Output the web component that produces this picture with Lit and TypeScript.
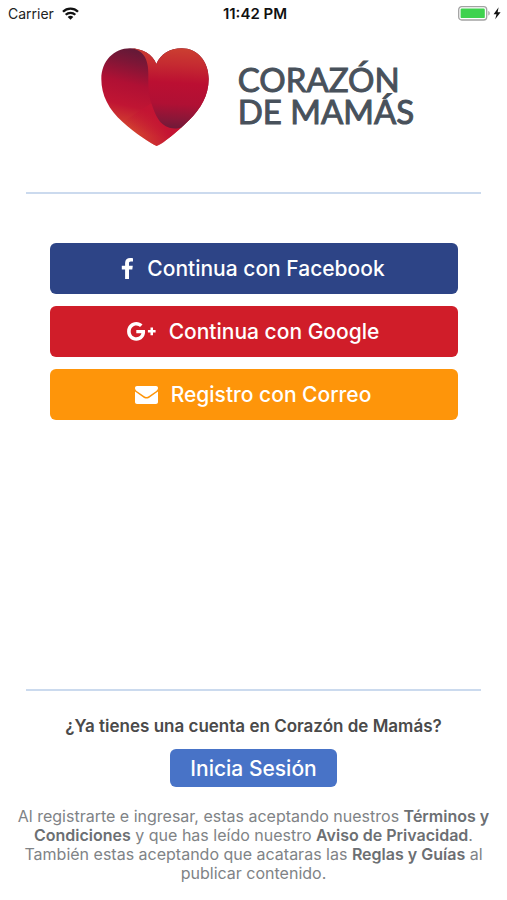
import { LitElement, html, css } from "lit";
import { customElement } from "lit/decorators.js";

@customElement("status-bar")
class StatusBar extends LitElement {
  static styles = css`
    :host {
      display: grid;
      grid-template-columns: 1fr auto 1fr;
      align-items: center;
      height: 27px;
      padding: 0 5px 0 8px;
      font-size: 14px;
      color: #222;
    }
    .carrier {
      display: flex;
      align-items: center;
      gap: 8px;
    }
    .time {
      font-size: 15px;
      font-weight: 600;
      color: #111;
    }
    .battery {
      display: flex;
      justify-content: flex-end;
    }
    svg {
      display: block;
    }
  `;

  render() {
    return html`
      <div class="carrier">
        <span>Carrier</span>
        <svg width="17" height="13" viewBox="0 0 17 13" aria-label="Wi-Fi">
          <g fill="none" stroke="#111" stroke-width="2.3">
            <path d="M1 4.8C5.2 0.6 11.8 0.6 16 4.8" />
            <path d="M3.7 7.8C6.4 5.1 10.6 5.1 13.3 7.8" />
          </g>
          <path d="M5.7 9.9C7.3 8.4 9.7 8.4 11.3 9.9L8.5 12.8Z" fill="#111" />
        </svg>
      </div>
      <div class="time">11:42 PM</div>
      <div class="battery">
        <svg width="44" height="15" viewBox="0 0 44 15" aria-label="Cargando">
          <rect x="0.7" y="0.7" width="28" height="13.3" rx="3" fill="#fff" stroke="#a3a3a3" stroke-width="1.3" />
          <rect x="2.6" y="2.6" width="24.2" height="9.5" rx="1.2" fill="#3fd24f" />
          <path d="M30.3 5C32.2 5.6 32.2 9 30.3 9.6Z" fill="#a3a3a3" />
          <path d="M40.6 1.3L35.6 8.2H38.5L37.2 13.2L42.6 6.3H39.6Z" fill="#111" />
        </svg>
      </div>
    `;
  }
}

@customElement("brand-logo")
class BrandLogo extends LitElement {
  static styles = css`
    :host {
      display: flex;
      justify-content: center;
      align-items: center;
      gap: 29px;
      padding-left: 8px;
    }
    svg {
      display: block;
      flex: none;
    }
    .name {
      margin: 0;
      padding-bottom: 4px;
      font-family: Lato, sans-serif;
      font-size: 33px;
      font-weight: 400;
      line-height: 32px;
      color: #48515b;
      -webkit-text-stroke: 1px #48515b;
    }
  `;

  render() {
    return html`
      <svg width="108" height="98" viewBox="33 38 324 294" aria-hidden="true">
        <defs>
          <linearGradient id="left" gradientUnits="userSpaceOnUse" x1="150" y1="50" x2="95" y2="280">
            <stop offset="0" stop-color="#651937" />
            <stop offset="0.15" stop-color="#7d1636" />
            <stop offset="0.42" stop-color="#b01034" />
            <stop offset="0.7" stop-color="#c01533" />
            <stop offset="1" stop-color="#d5482f" />
          </linearGradient>
          <linearGradient id="tail" gradientUnits="userSpaceOnUse" x1="120" y1="300" x2="230" y2="250">
            <stop offset="0" stop-color="#c41433" stop-opacity="0" />
            <stop offset="0.9" stop-color="#c41433" />
          </linearGradient>
          <linearGradient id="right" gradientUnits="userSpaceOnUse" x1="265" y1="40" x2="252" y2="284">
            <stop offset="0" stop-color="#cb3e31" />
            <stop offset="0.2" stop-color="#c52a31" />
            <stop offset="0.42" stop-color="#bb0f32" />
            <stop offset="0.68" stop-color="#b01034" />
            <stop offset="0.88" stop-color="#871738" />
            <stop offset="1" stop-color="#6a1b38" />
          </linearGradient>
        </defs>
        <path
          d="M200 332C182 325 136 294 98 260C56 222 34 180 34 131C34 77 72 39 120 39C158 39 188 58 199 86C212 56 240 39 275 39C322 39 356 78 356 131C356 180 332 220 300 252C268 284 220 325 200 332Z"
          fill="url(#left)"
        />
        <path
          d="M200 332C182 325 136 294 98 260L184 204L276 275C240 306 214 328 200 332Z"
          fill="url(#tail)"
        />
        <path
          d="M120 39C158 39 188 58 199 86C212 56 240 39 275 39C322 39 356 78 356 131C356 180 332 220 300 252C290 262 284 269 276 275C262 281 250 280 238 277C208 268 197 242 184 204C174 174 175 150 175 118C176 72 160 42 120 39Z"
          fill="url(#right)"
        />
      </svg>
      <h1 class="name">CORAZÓN<br />DE MAMÁS</h1>
    `;
  }
}

@customElement("app-root")
class AppRoot extends LitElement {
  static styles = css`
    :host {
      display: flex;
      flex-direction: column;
      box-sizing: border-box;
      min-height: 100vh;
      background: #fff;
      font-family: Inter, "Liberation Sans", sans-serif;
    }
    brand-logo {
      margin-top: 21px;
    }
    .rule {
      width: calc(100% - 52px);
      height: 2px;
      margin: 0 auto;
      border: 0;
      background: #cbdaee;
    }
    .rule.top {
      margin-top: 46px;
    }
    .options {
      display: flex;
      flex-direction: column;
      flex: 1;
      gap: 12px;
      padding: 49px 49px 24px 50px;
    }
    button {
      border: 0;
      border-radius: 6px;
      font-family: inherit;
      font-size: 21px;
      font-weight: 500;
      color: #fff;
      cursor: pointer;
    }
    .option {
      display: flex;
      justify-content: center;
      align-items: center;
      gap: 13px;
      height: 51px;
      padding: 0 2px 0 0;
    }
    .option svg {
      display: block;
    }
    .facebook {
      background: #2d4486;
    }
    .google {
      background: #d01d29;
    }
    .mail {
      background: #fe950a;
    }
    footer {
      display: flex;
      flex-direction: column;
      align-items: center;
      padding: 24px 16px 17px;
      text-align: center;
    }
    .question {
      margin: 0 0 12px;
      font-size: 17px;
      font-weight: 600;
      line-height: 22px;
      color: #4a4a4a;
    }
    .login {
      height: 38px;
      padding: 0 20px;
      background: #4873c7;
    }
    .legal {
      margin: 20px 0 0;
      font-size: 16px;
      line-height: 19px;
      color: #808386;
    }
    .legal a {
      font-weight: 600;
      color: #6c6f73;
      text-decoration: none;
    }
  `;

  render() {
    return html`
      <status-bar></status-bar>
      <brand-logo></brand-logo>
      <hr class="rule top" />
      <main class="options">
        <button class="option facebook">
          <svg width="13" height="21" viewBox="0 0 13 21" aria-hidden="true">
            <path
              d="M12 .2V3.6H9.9C8.4 3.6 8 4.3 8 5.4V7.8H11.8L11.3 11.5H8V21H4.1V11.5H.8V7.8H4.1V5C4.1 1.8 6.1 0 9.1 0C10.5 0 11.7.1 12 .2Z"
              fill="#fff"
            />
          </svg>
          Continua con Facebook
        </button>
        <button class="option google">
          <svg width="29" height="19" viewBox="0 0 29 19" aria-hidden="true">
            <path
              d="M18.1 9.5C18.1 14.9 14.6 18.7 9.3 18.7C4.2 18.7.1 14.6.1 9.4S4.2.1 9.3.1C11.8.1 13.9 1 15.5 2.5L13 5C12.3 4.3 11.1 3.5 9.3 3.5C6.2 3.5 3.7 6.1 3.7 9.4S6.2 15.2 9.3 15.2C12.9 15.2 14.2 12.6 14.4 11.3H9.3V7.9H17.9C18 8.4 18.1 8.9 18.1 9.5ZM28.6 8.1V10.6H26V13.2H23.5V10.6H20.9V8.1H23.5V5.5H26V8.1Z"
              fill="#fff"
            />
          </svg>
          Continua con Google
        </button>
        <button class="option mail">
          <svg width="23" height="18" viewBox="0 0 23 18" aria-hidden="true">
            <path
              d="M2 0H21C22.2 0 23 .9 23 2C23 3.3 22 4.5 21 5.2L14 10C13.2 10.6 12.4 11 11.5 11S9.8 10.6 9 10L2 5.2C1.2 4.6 0 3.3 0 2.2C0 .9.8 0 2 0ZM0 5.6L7.7 11C9 11.9 10.2 12.6 11.5 12.6S14 11.9 15.3 11L23 5.6V16C23 17.1 22.1 18 21 18H2C.9 18 0 17.1 0 16Z"
              fill="#fff"
            />
          </svg>
          Registro con Correo
        </button>
      </main>
      <hr class="rule" />
      <footer>
        <p class="question">¿Ya tienes una cuenta en Corazón de Mamás?</p>
        <button class="login">Inicia Sesión</button>
        <p class="legal">
          Al registrarte e ingresar, estas aceptando nuestros <a href="#terminos">Términos y Condiciones</a> y que has
          leído nuestro <a href="#privacidad">Aviso de Privacidad</a>. También estas aceptando que acataras las
          <a href="#reglas">Reglas y Guías</a> al publicar contenido.
        </p>
      </footer>
    `;
  }
}
